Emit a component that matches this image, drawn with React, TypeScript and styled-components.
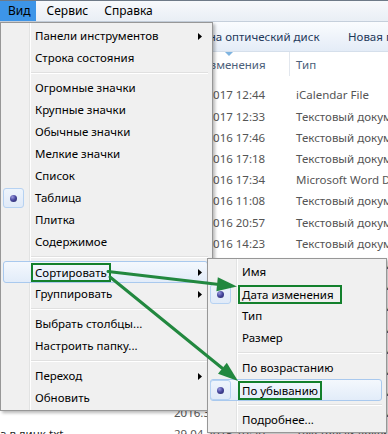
import React from "react";
import styled, { createGlobalStyle } from "styled-components";

const Global = createGlobalStyle`
  html, body { margin: 0; padding: 0; background: #fff; }
  body { font-family: "Noto Sans", "Open Sans", sans-serif; font-size: 11.5px; }
`;

const Screen = styled.div`
  position: relative;
  width: 388px;
  height: 434px;
  overflow: hidden;
  background: #fff;
  color: #000;
`;

/* ---------- window behind the menu ---------- */

const MenuBar = styled.div`
  box-sizing: border-box;
  height: 22px;
  display: flex;
  gap: 3px;
  border-top: 1px solid #6e7a88;
  border-bottom: 1px solid #c5cfdb;
  background: linear-gradient(#f7f9fc, #e9eef5);
  font-size: 12px;
`;

const MenuBarItem = styled.div<{ $open?: boolean }>`
  padding: 0 5px 0 8px;
  line-height: 20px;
  background: ${(p) => (p.$open ? "#3d95e8" : "transparent")};
  color: #000;
`;

const Toolbar = styled.div`
  box-sizing: border-box;
  height: 30px;
  display: flex;
  align-items: center;
  padding-left: 140px;
  background: linear-gradient(#fafcfe, #e4ecf7);
  border-bottom: 1px solid #d5dfeb;
  color: #1e395b;
  white-space: nowrap;
`;

const ToolButton = styled.div<{ $w?: number }>`
  box-sizing: border-box;
  padding: 0 15px;
  ${(p) => (p.$w ? `width: ${p.$w}px; text-align: right;` : "")}
`;

const Columns = styled.div`
  display: grid;
  grid-template-columns: 174px 115px 1fr;
  white-space: nowrap;
`;

const HeaderRow = styled(Columns)`
  height: 24px;
  align-items: stretch;
  color: #4c607a;
`;

const HeaderCell = styled.div<{ $divider?: boolean }>`
  position: relative;
  display: flex;
  align-items: center;
  padding-left: ${(p) => (p.$divider ? 6 : 0)}px;
  border-left: ${(p) => (p.$divider ? "1px solid #e2e7ee" : "none")};
  overflow: hidden;
`;

const SortMark = styled.svg`
  position: absolute;
  left: 51px;
  top: 0px;
`;

const FileList = styled.div`
  margin-top: 8.4px;
`;

const FileRow = styled(Columns)`
  height: 21.2px;
  align-items: center;
  color: #555;
`;

const NameCell = styled.div`
  color: #1e1e1e;
  overflow: hidden;
`;

const Cell = styled.div<{ $pad?: number }>`
  padding-left: ${(p) => p.$pad ?? 0}px;
  overflow: hidden;
`;

/* ---------- context menus ---------- */

const MenuPanel = styled.div<{ $left: number; $top: number; $width: number }>`
  position: absolute;
  left: ${(p) => p.$left}px;
  top: ${(p) => p.$top}px;
  width: ${(p) => p.$width}px;
  box-sizing: border-box;
  padding: 2px 4px 1px 2px;
  display: flex;
  flex-direction: column;
  border: 1px solid #979797;
  background:
    linear-gradient(to right, transparent 28px, #e2e3e3 28px, #e2e3e3 29px, #ffffff 29px, #ffffff 30px, transparent 30px),
    #f0f0f0;
  box-shadow: 2px 2px 3px rgba(0, 0, 0, 0.28);
  white-space: nowrap;
`;

const MenuRow = styled.div<{ $hot?: boolean }>`
  box-sizing: border-box;
  height: 22px;
  display: grid;
  grid-template-columns: 26px 1fr 18px;
  align-items: center;
  border-radius: 3px;
  border: 1px solid ${(p) => (p.$hot ? "#a9c9ee" : "transparent")};
  background: ${(p) => (p.$hot ? "linear-gradient(#f4f8fd, #e2ecf9)" : "transparent")};
`;

const Gutter = styled.div`
  height: 20px;
  display: flex;
  align-items: center;
`;

const CheckBox = styled.div`
  box-sizing: border-box;
  width: 21px;
  height: 20px;
  margin-left: -1px;
  display: flex;
  align-items: center;
  justify-content: center;
  border: 1px solid #b6d2f2;
  border-radius: 3px;
  background: linear-gradient(#eef4fc, #e0eaf8);
`;

const Bullet = styled.div`
  width: 7px;
  height: 7px;
  border-radius: 50%;
  background: radial-gradient(circle at 35% 30%, #9a9ae0 0%, #4a4aa0 45%, #20205e 100%);
`;

const Label = styled.div`
  padding-left: 5px;
  line-height: 20px;
  display: flex;
  align-items: center;
`;

const Marked = styled.span<{ $pr: number }>`
  box-sizing: border-box;
  display: inline-block;
  height: 19px;
  line-height: 15px;
  margin-left: -4px;
  padding: 0 ${(p) => p.$pr}px 0 2px;
  border: 2px solid #13802c;
`;

const Arrow = styled.svg`
  margin-left: 9px;
  display: block;
`;

const Separator = styled.div`
  height: 8px;
  margin-left: 28px;
  display: flex;
  flex-direction: column;
  justify-content: center;
  &::before {
    content: "";
    display: block;
    border-top: 1px solid #e0e0e0;
    border-bottom: 1px solid #ffffff;
  }
`;

const Annotation = styled.svg`
  position: absolute;
  left: 0;
  top: 0;
  pointer-events: none;
`;

type Entry =
  | { sep: true }
  | { sep?: false; label: string; checked?: boolean; hot?: boolean; sub?: boolean; mark?: number };

const SEP: Entry = { sep: true };

const mainMenu: Entry[] = [
  { label: "Панели инструментов", sub: true },
  { label: "Строка состояния" },
  SEP,
  { label: "Огромные значки" },
  { label: "Крупные значки" },
  { label: "Обычные значки" },
  { label: "Мелкие значки" },
  { label: "Список" },
  { label: "Таблица", checked: true },
  { label: "Плитка" },
  { label: "Содержимое" },
  SEP,
  { label: "Сортировать", sub: true, hot: true, mark: 2 },
  { label: "Группировать", sub: true },
  SEP,
  { label: "Выбрать столбцы..." },
  { label: "Настроить папку..." },
  SEP,
  { label: "Переход", sub: true },
  { label: "Обновить" },
];

const sortMenu: Entry[] = [
  { label: "Имя" },
  { label: "Дата изменения", checked: true, mark: 6 },
  { label: "Тип" },
  { label: "Размер" },
  SEP,
  { label: "По возрастанию" },
  { label: "По убыванию", checked: true, hot: true, mark: 2 },
  SEP,
  { label: "Подробнее..." },
];

const files: [string, string, string][] = [
  ["", "10.05.2017 12:44", "iCalendar File"],
  ["", "10.05.2017 12:33", "Текстовый документ"],
  ["", "29.12.2016 17:46", "Текстовый документ"],
  ["", "23.11.2016 17:18", "Текстовый документ"],
  ["", "16.11.2016 17:34", "Microsoft Word Document"],
  ["", "09.11.2016 11:08", "Текстовый документ"],
  ["", "27.10.2016 20:57", "Текстовый документ"],
  ["", "26.10.2016 14:23", "Текстовый документ"],
  ["", "21.10.2016 10:15", "Текстовый документ"],
  ["", "18.09.2016 09:41", "Текстовый документ"],
  ["", "02.08.2016 16:02", "Текстовый документ"],
  ["", "14.07.2016 13:27", "Текстовый документ"],
  ["", "30.06.2016 18:50", "Текстовый документ"],
  ["", "07.06.2016 12:11", "Текстовый документ"],
  ["", "16.05.2016 15:36", "Текстовый документ"],
  ["", "2016.31.03 11:45", "Текстовый документ"],
  ["а в линк.txt", "29.04.2015 10:20", "Текстовый документ"],
];

function Menu({ items, left, top, width }: { items: Entry[]; left: number; top: number; width: number }) {
  return (
    <MenuPanel $left={left} $top={top} $width={width}>
      {items.map((e, i) =>
        e.sep ? (
          <Separator key={i} />
        ) : (
          <MenuRow key={i} $hot={e.hot}>
            <Gutter>
              {e.checked && (
                <CheckBox>
                  <Bullet />
                </CheckBox>
              )}
            </Gutter>
            <Label>{e.mark !== undefined ? <Marked $pr={e.mark}>{e.label}</Marked> : e.label}</Label>
            <div>
              {e.sub && (
                <Arrow width="4" height="7" viewBox="0 0 4 7">
                  <path d="M0 0 L4 3.5 L0 7 Z" fill="#000" />
                </Arrow>
              )}
            </div>
          </MenuRow>
        )
      )}
    </MenuPanel>
  );
}

export default function App() {
  return (
    <Screen>
      <Global />
      <MenuBar>
        <MenuBarItem $open>Вид</MenuBarItem>
        <MenuBarItem>Сервис</MenuBarItem>
        <MenuBarItem>Справка</MenuBarItem>
      </MenuBar>
      <Toolbar>
        <ToolButton $w={193}>Записать на оптический диск</ToolButton>
        <ToolButton>Новая папка</ToolButton>
      </Toolbar>
      <HeaderRow>
        <HeaderCell>Имя</HeaderCell>
        <HeaderCell>
          <SortMark width="8" height="5" viewBox="0 0 8 5">
            <path d="M0 0 L8 0 L4 4 Z" fill="#7fb4e0" />
          </SortMark>
          Дата изменения
        </HeaderCell>
        <HeaderCell $divider>Тип</HeaderCell>
      </HeaderRow>
      <FileList>
        {files.map(([name, date, type], i) => (
          <FileRow key={i}>
            <NameCell>{name}</NameCell>
            <Cell>{date}</Cell>
            <Cell $pad={7}>{type}</Cell>
          </FileRow>
        ))}
      </FileList>

      <Menu items={mainMenu} left={0} top={22} width={213} />
      <Menu items={sortMenu} left={207} top={258} width={180} />

      <Annotation width="388" height="434" viewBox="0 0 388 434">
        <g stroke="#22883f" strokeWidth="3" strokeLinecap="round" fill="#22883f">
          <line x1="108" y1="271.5" x2="217" y2="284.2" />
          <polygon stroke="none" points="237,286.5 216.4,291.2 217.8,277.2" />
          <line x1="110" y1="277" x2="222" y2="368" />
          <polygon stroke="none" points="238,381 218,373.8 226.8,362.7" />
        </g>
      </Annotation>
    </Screen>
  );
}
